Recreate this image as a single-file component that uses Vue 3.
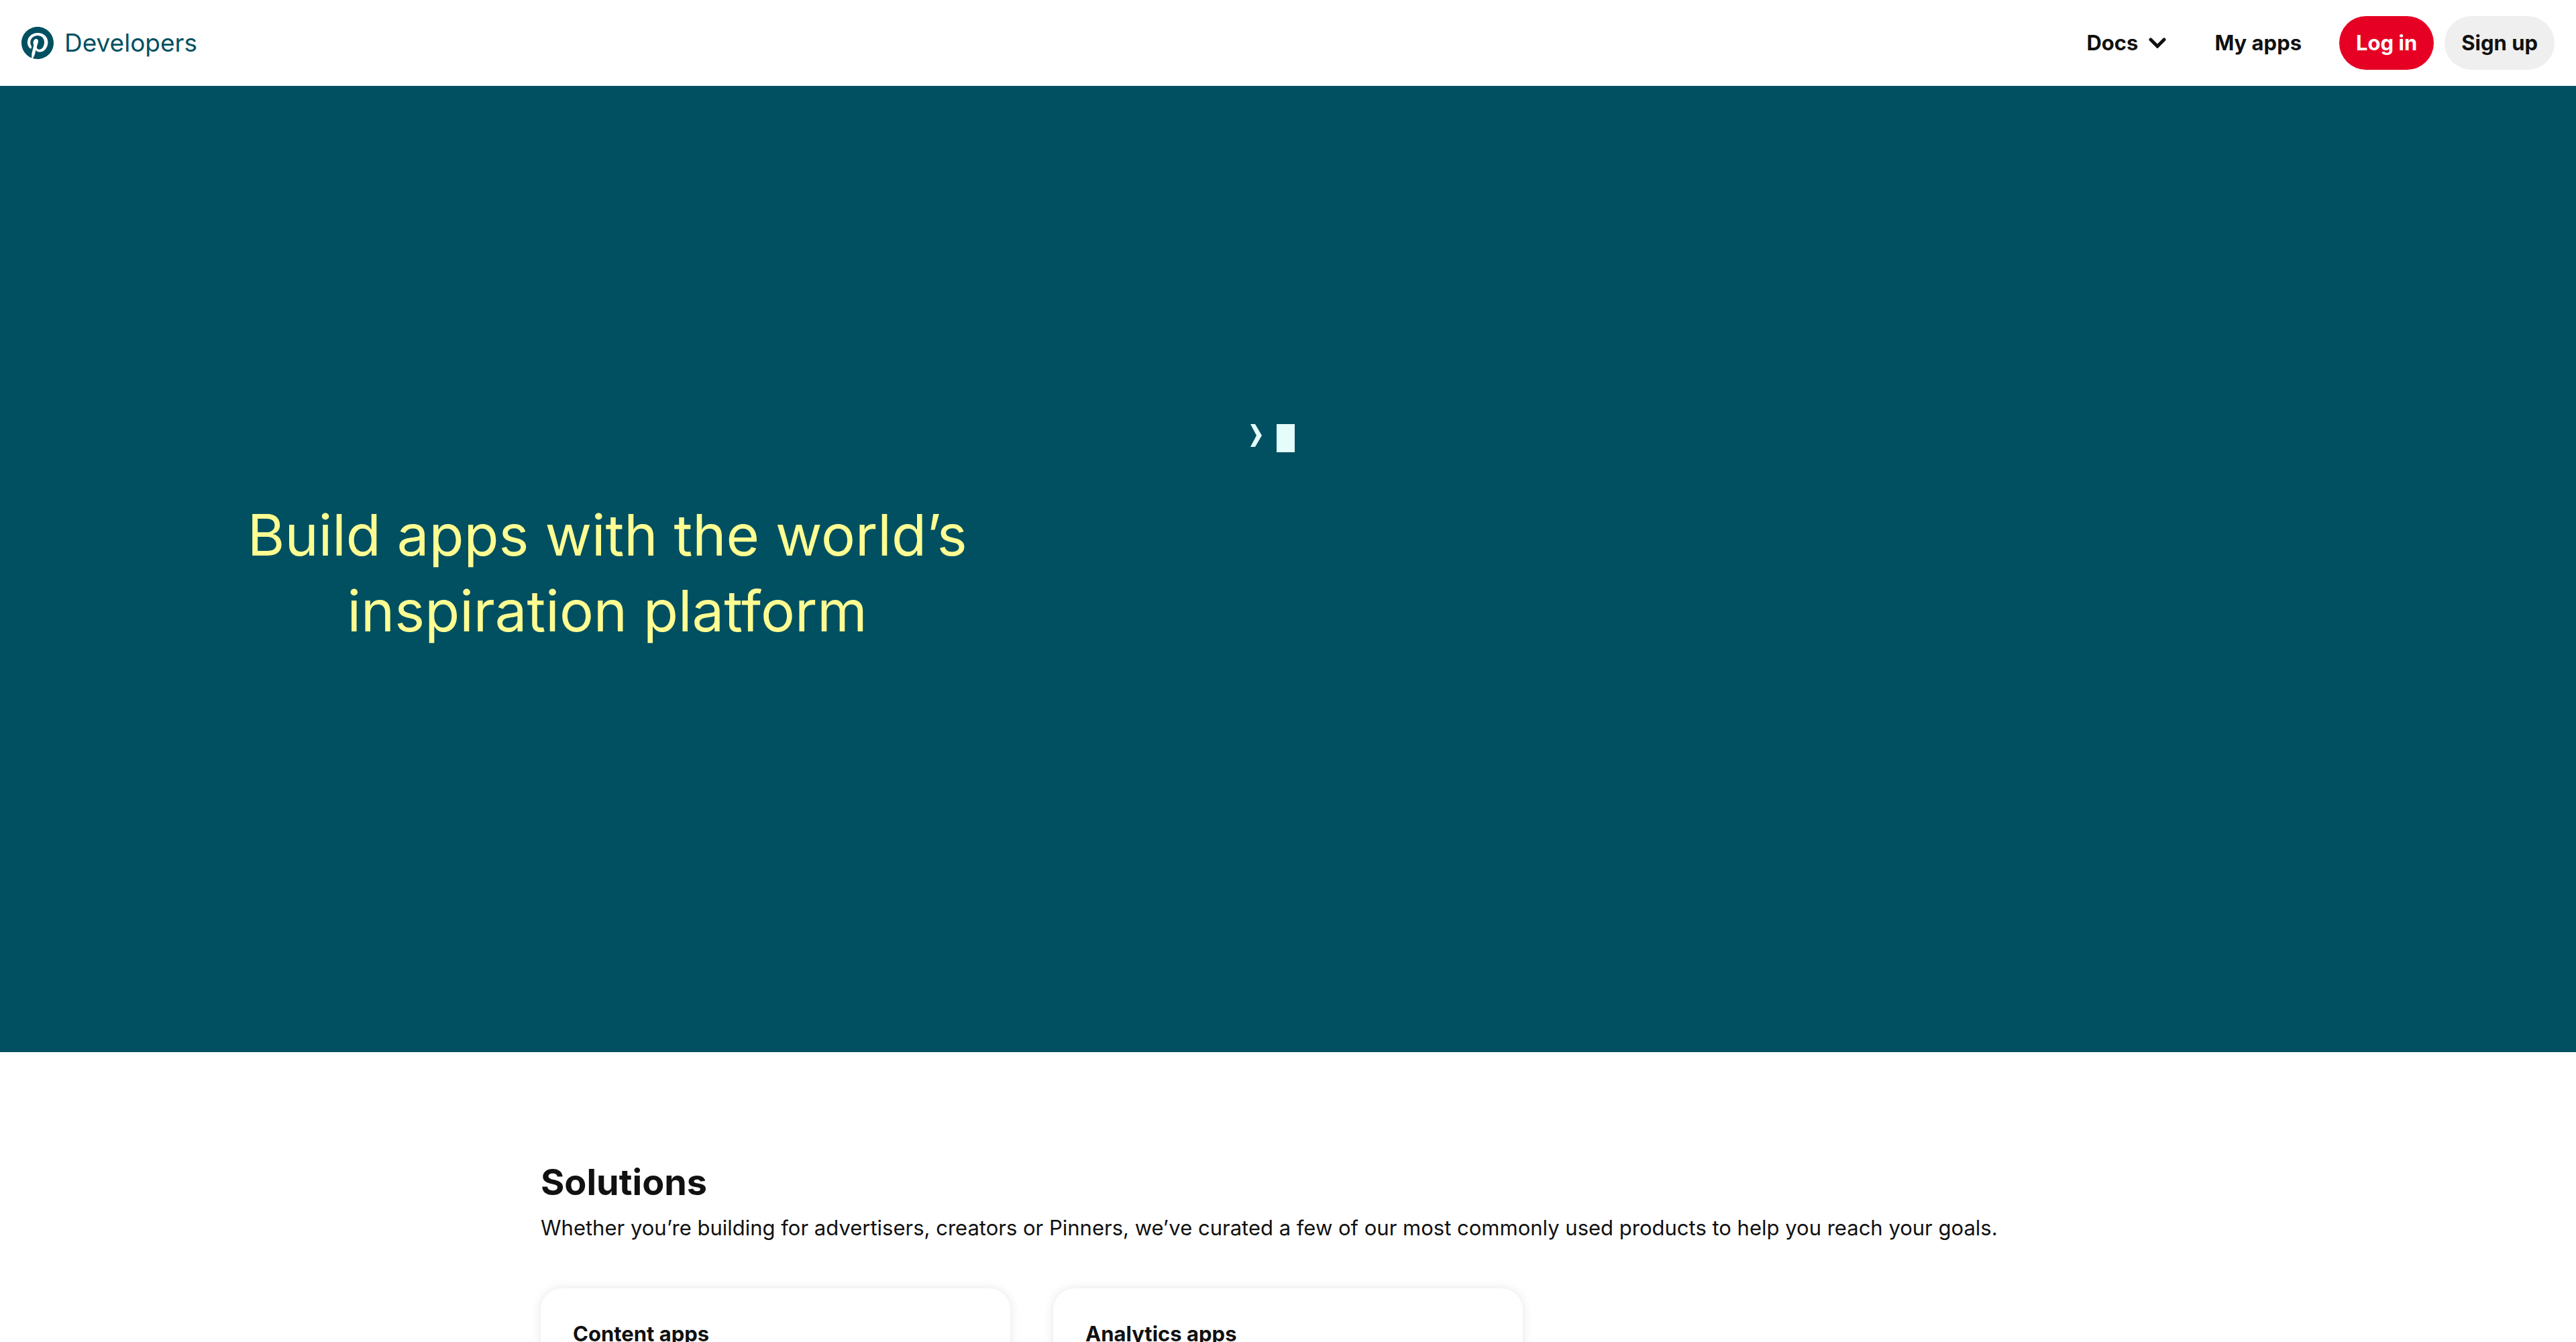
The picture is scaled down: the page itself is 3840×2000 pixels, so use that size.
<script setup>
const solutions = ['Content apps', 'Analytics apps']
</script>

<template>
  <div class="page">
    <header class="topbar">
      <a class="brand" href="#" aria-label="Pinterest Developers">
        <svg class="logo" viewBox="0 0 24 24" aria-hidden="true">
          <circle cx="12" cy="12" r="11.5" fill="#fff" />
          <path
            fill="currentColor"
            d="M0 12c0 5.123 3.211 9.497 7.73 11.218-.11-.937-.227-2.482.025-3.566.217-.932 1.401-5.938 1.401-5.938s-.357-.715-.357-1.774c0-1.66.962-2.9 2.161-2.9 1.02 0 1.512.765 1.512 1.682 0 1.025-.653 2.557-.99 3.978-.281 1.189.597 2.159 1.769 2.159 2.123 0 3.756-2.239 3.756-5.471 0-2.861-2.056-4.86-4.991-4.86-3.398 0-5.393 2.549-5.393 5.184 0 1.027.395 2.127.889 2.726a.36.36 0 0 1 .083.343c-.091.378-.293 1.189-.332 1.355-.053.218-.173.265-.4.159-1.492-.694-2.424-2.875-2.424-4.627 0-3.769 2.737-7.229 7.892-7.229 4.144 0 7.365 2.953 7.365 6.899 0 4.117-2.595 7.431-6.199 7.431-1.211 0-2.348-.63-2.738-1.373 0 0-.599 2.282-.744 2.84-.282 1.084-1.064 2.456-1.549 3.235C9.584 23.815 10.77 24 12 24c6.627 0 12-5.373 12-12S18.627 0 12 0 0 5.373 0 12"
          />
        </svg>
        <span>Developers</span>
      </a>
      <nav class="nav">
        <button class="link" type="button">
          Docs
          <svg class="caret" viewBox="0 0 26 16" aria-hidden="true">
            <path d="M3 3 13 13 23 3" fill="none" stroke="currentColor" stroke-width="5" stroke-linecap="round" />
          </svg>
        </button>
        <a class="link" href="#">My apps</a>
        <div class="actions">
          <button class="pill primary" type="button">Log in</button>
          <button class="pill" type="button">Sign up</button>
        </div>
      </nav>
    </header>

    <main>
      <section class="hero">
        <h1>Build apps with the world’s<br />inspiration platform</h1>
        <div class="terminal">
          <svg class="prompt" viewBox="0 0 17 34" aria-hidden="true">
            <path d="M0 0h7l10 17-10 17H0l9-17z" fill="currentColor" />
          </svg>
          <span class="cursor"></span>
        </div>
      </section>

      <section class="solutions">
        <h2>Solutions</h2>
        <p>
          Whether you’re building for advertisers, creators or Pinners, we’ve curated a few of our most
          commonly used products to help you reach your goals.
        </p>
        <div class="cards">
          <article v-for="title in solutions" :key="title" class="card">
            <h3>{{ title }}</h3>
          </article>
        </div>
      </section>
    </main>
  </div>
</template>

<style>
body {
  margin: 0;
  background: #fff;
}
</style>

<style scoped>
.page {
  height: 100vh;
  overflow: hidden;
  color: #111;
  font-family: Inter, "Liberation Sans", sans-serif;
  font-size: 31px;
  line-height: 40px;
}

.topbar {
  display: flex;
  align-items: center;
  justify-content: space-between;
  height: 128px;
  padding: 0 32px;
  box-sizing: border-box;
}

.brand {
  display: flex;
  align-items: center;
  gap: 16px;
  color: #015061;
  font-size: 37px;
  line-height: 44px;
  text-decoration: none;
}

.logo {
  width: 48px;
  height: 48px;
}

.nav {
  display: flex;
  align-items: center;
  gap: 72px;
}

button {
  border: 0;
  font: inherit;
  cursor: pointer;
}

.link,
.pill {
  color: #111;
  font-weight: 700;
  text-decoration: none;
}

.link {
  display: flex;
  align-items: center;
  gap: 16px;
  padding: 0;
  background: none;
}

.caret {
  width: 26px;
  height: 16px;
}

.actions {
  display: flex;
  gap: 16px;
  margin-left: -16px;
}

.pill {
  height: 80px;
  padding: 0 25px;
  border-radius: 40px;
  background: #efefef;
}

.primary {
  background: #e60023;
  color: #fff;
}

.hero {
  display: grid;
  grid-template-columns: 33fr 37fr;
  min-height: 1440px;
  background: #015061;
}

h1 {
  align-self: center;
  margin: 0;
  padding-top: 12px;
  color: #fffd92;
  font-size: 85px;
  font-weight: 400;
  line-height: 113px;
  text-align: center;
}

.terminal {
  display: flex;
  align-items: flex-start;
  gap: 22px;
  padding: 504px 54px;
  color: #e4fcfa;
}

.prompt {
  width: 17px;
  height: 34px;
}

.cursor {
  width: 27px;
  height: 42px;
  background: currentColor;
}

.solutions {
  max-width: 2228px;
  margin: 0 auto;
  padding: 160px 32px;
}

h2 {
  margin: 0;
  font-size: 54px;
  font-weight: 700;
  line-height: 68px;
}

p {
  margin: 14px 0 70px;
}

.cards {
  display: grid;
  grid-template-columns: repeat(3, 1fr);
  gap: 64px;
}

.card {
  padding: 48px;
  border-radius: 32px;
  background: #fff;
  box-shadow: 0 0 16px rgba(0, 0, 0, 0.1);
}

h3 {
  margin: 0;
  font-size: 31px;
  font-weight: 700;
  line-height: 40px;
}
</style>
